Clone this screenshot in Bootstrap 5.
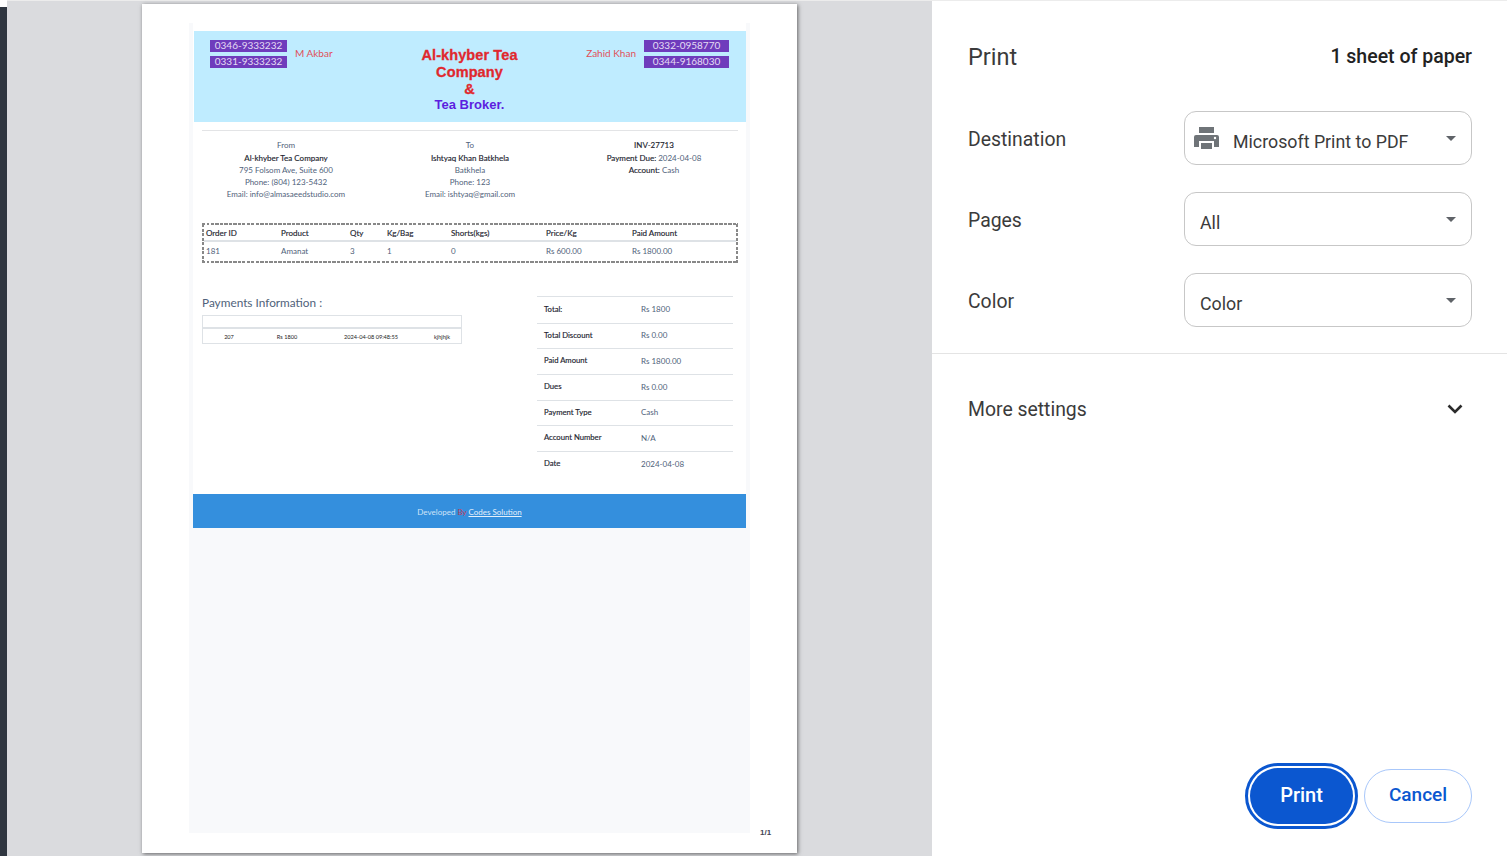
<!DOCTYPE html>
<html lang="en"><head><meta charset="utf-8"><title>Print</title>
<link href="https://cdn.jsdelivr.net/npm/bootstrap@5.3.0/dist/css/bootstrap.min.css" rel="stylesheet">
<style>
html,body{height:856px;overflow:hidden;margin:0;background:#fff}
.shell{height:856px;font-family:Roboto,sans-serif}
.edge{width:7px;background:#2f3640;margin-top:7px;flex:none}
.preview{width:925px;flex:none;background:#dadbde;padding:3px 0 0 135px;border-top:1px solid #ececec}
.paper{width:655px;height:849px;background:#fff;box-shadow:1px 1px 4px rgba(0,0,0,.55);padding:19px 0 0 47px;font-family:Lato,sans-serif;font-size:8px;color:#50627a}
.sheet{width:561px;height:810px;background:#f8f9fb;padding:0 4px;flex:none}
.pagenum{margin:805px 0 0 10px;font:700 8px/10px "Liberation Sans",sans-serif;color:#445;width:14px}
.inv{background:#fff;height:471px;padding-top:8px}
.band{height:91px;background:#bfecff;margin-left:1px;padding:9px 17px 0 16px}
.phones{display:flex;flex-direction:column;gap:4px}
.phone{height:12px;background:#6f3cbc;color:#e4dcf4;font-size:10px;line-height:11px;text-align:center}
.w77{width:77px}.w85{width:85px}
.who{font-size:10px;color:#e0505a;height:26px;line-height:26px}
.brand{width:130px;text-align:center;font-family:"Liberation Sans",sans-serif;font-weight:700;font-size:14.5px;line-height:17px;color:#e0282e;margin-top:7px;letter-spacing:.1px;-webkit-text-stroke:.3px #e0282e}
.brand div:last-child{font-size:13px;color:#5c1ee0;line-height:14px;-webkit-text-stroke:0;letter-spacing:0}
.side{width:184px}
.rule{height:1px;background:#e3e4e6;margin:8px 8px 0 9px}
.addr{margin:8px 0 0 1px;padding-top:.3px;width:552px;line-height:12.2px;text-align:center;font-size:8px}
.addr>div{width:33.333%}
.ink{color:#1e2530;-webkit-text-stroke:.15px #1e2530}
.dash{width:536px;height:40px;margin:23px 0 0 9px;padding:2px;overflow:hidden;background:
 repeating-linear-gradient(90deg,#888 0 3px,transparent 3px 4.5px) 0 0/100% 2px no-repeat,
 repeating-linear-gradient(90deg,#888 0 3px,transparent 3px 4.5px) 0 100%/100% 2px no-repeat,
 repeating-linear-gradient(0deg,#888 0 3px,transparent 3px 4.5px) 0 0/2px 100% no-repeat,
 repeating-linear-gradient(0deg,#888 0 3px,transparent 3px 4.5px) 100% 0/2px 100% no-repeat}
.dash table,.mini table,.sums table{margin:0;table-layout:fixed;width:100%;color:inherit;background:transparent}
.dash th{font-weight:400;color:#1e2530;-webkit-text-stroke:.15px #1e2530;font-size:8px;padding:3px 0 1px 2px;height:16px;line-height:11px;border-bottom:2px solid #dee2e6;background:transparent}
.dash td{font-size:8px;padding:3px 0 3px 2px;line-height:12px;border:0;color:#50627a;background:transparent}
.cols{margin:33px 0 0 9px;width:531px}
.paytitle{font-size:11.8px;line-height:14px;margin:0;color:#50627a}
.mini{width:260px;margin-top:5px;border:1px solid #dee2e6}
.blank{height:13px;border-bottom:2px solid #dee2e6}
.mini td{font-size:5.6px;line-height:8px;text-align:center;padding:4px 0 2px;height:14px;border:0;color:#222;background:transparent}
.sums{width:196px;margin-left:75px;border-top:1px solid #dee2e6}
.sums tr{height:25.7px}
.sums th{width:104px;padding:0 0 1px 7px;font-size:7.7px;font-weight:400;-webkit-text-stroke:.15px #1e2530;vertical-align:middle;color:#1e2530;border-bottom:1px solid #dee2e6;background:transparent}
.sums td{padding:0 0 1px;font-size:8px;vertical-align:middle;border-bottom:1px solid #dee2e6;color:#50627a;background:transparent}
.sums tr:last-child th,.sums tr:last-child td{border-bottom:0}
.foot{height:34px;background:#348fdd;color:#cfe4f8;font-size:8px;line-height:36px;text-align:center}
.foot em{font-style:normal;color:#c0405a}
.foot a{color:#e4f0fb}
.panel{flex:1;border-top:1px solid #ececec;color:#1f1f1f}
.top{padding:0 35px 0 36px;height:353px;border-bottom:1px solid #e4e4e4}
.head{height:110px;padding-top:38px;line-height:36px}
.h1x{font-size:23.5px;color:#3b3b3b}
.sheets{font-size:19.5px;font-weight:500;color:#222}
.line{height:54px;margin-bottom:27px}
.lbl{font-size:19.4px;color:#3b3b3b;padding-top:4px}
.pick{width:288px;height:54px;border:1px solid #c7c7c7;border-radius:12px;padding:5px 15px;font-size:17.8px;color:#3b3b3b}
.pick .val{margin-top:11px;line-height:28px}
.caret{width:0;height:0;border-left:5.5px solid transparent;border-right:5.500px solid transparent;border-top:5.5px solid #5f6368;margin-left:auto;align-self:center}
.ico{width:27px;height:27px;margin:3px 13px 0 -7px;align-self:center;flex:none}
.more{padding:38px 35px 0 36px;height:414px;font-size:19.4px;line-height:36px;color:#3b3b3b}
.more svg{margin:12px 9px 0 0}
.acts{padding-right:35px;gap:6px}
.go,.stop{font-family:Roboto,sans-serif;font-size:20px;line-height:20px;font-weight:500;border-radius:28px;padding:0 0 2px;height:54px}
.go{width:103px;height:56px;background:#0b57d0;color:#fff;border:0;outline:3px solid #0b57d0;outline-offset:2px;margin-right:5px}
.stop{width:108px;font-size:19px;background:#fff;color:#0b57d0;border:1px solid #a8c7fa}
</style></head>
<body>
<div class="shell d-flex">
 <div class="edge"></div>
 <div class="preview">
  <div class="paper d-flex">
   <div class="sheet">
    <div class="inv">
     <div class="band d-flex justify-content-between">
      <div class="side d-flex gap-2">
       <div class="phones w77"><div class="phone">0346-9333232</div><div class="phone">0331-9333232</div></div>
       <div class="who">M Akbar</div>
      </div>
      <div class="brand"><div>Al-khyber Tea</div><div>Company</div><div>&amp;</div><div>Tea Broker.</div></div>
      <div class="side d-flex gap-2 justify-content-end">
       <div class="who">Zahid Khan</div>
       <div class="phones w85"><div class="phone">0332-0958770</div><div class="phone">0344-9168030</div></div>
      </div>
     </div>
     <div class="rule"></div>
     <div class="addr d-flex">
      <div><div>From</div><div class="ink">Al-khyber Tea Company</div><div>795 Folsom Ave, Suite 600</div><div>Phone: (804) 123-5432</div><div>Email: info@almasaeedstudio.com</div></div>
      <div><div>To</div><div class="ink">Ishtyaq Khan Batkhela</div><div>Batkhela</div><div>Phone: 123</div><div>Email: ishtyaq@gmail.com</div></div>
      <div><div class="ink">INV-27713</div><div><span class="ink">Payment Due:</span> 2024-04-08</div><div><span class="ink">Account:</span> Cash</div></div>
     </div>
     <div class="dash">
      <table class="table">
       <colgroup><col style="width:75px"><col style="width:69px"><col style="width:37px"><col style="width:64px"><col style="width:95px"><col style="width:86px"><col></colgroup>
       <thead><tr><th>Order ID</th><th>Product</th><th>Qty</th><th>Kg/Bag</th><th>Shorts(kgs)</th><th>Price/Kg</th><th>Paid Amount</th></tr></thead>
       <tbody><tr><td>181</td><td>Amanat</td><td>3</td><td>1</td><td>0</td><td>Rs 600.00</td><td>Rs 1800.00</td></tr></tbody>
      </table>
     </div>
     <div class="cols d-flex">
      <div>
       <p class="paytitle">Payments Information :</p>
       <div class="mini">
        <div class="blank"></div>
        <table class="table"><colgroup><col style="width:52px"><col style="width:64px"><col style="width:104px"><col></colgroup><tbody><tr><td>207</td><td>Rs 1800</td><td>2024-04-08 09:48:55</td><td>kjhjhjk</td></tr></tbody></table>
       </div>
      </div>
      <div class="sums">
       <table class="table"><tbody>
        <tr><th>Total:</th><td>Rs 1800</td></tr>
        <tr><th>Total Discount</th><td>Rs 0.00</td></tr>
        <tr><th>Paid Amount</th><td>Rs 1800.00</td></tr>
        <tr><th>Dues</th><td>Rs 0.00</td></tr>
        <tr><th>Payment Type</th><td>Cash</td></tr>
        <tr><th>Account Number</th><td>N/A</td></tr>
        <tr><th>Date</th><td>2024-04-08</td></tr>
       </tbody></table>
      </div>
     </div>
    </div>
    <div class="foot">Developed <em>By</em> <a href="#">Codes Solution</a></div>
   </div>
   <div class="pagenum">1/1</div>
  </div>
 </div>
 <div class="panel">
  <div class="top">
   <div class="head d-flex justify-content-between"><span class="h1x">Print</span><span class="sheets">1 sheet of paper</span></div>
   <div class="line d-flex justify-content-between align-items-center"><span class="lbl">Destination</span>
    <div class="pick d-flex"><svg class="ico" viewBox="0 0 27 27" fill="#6f7478"><path d="M6 1h15v6H6z"/><path d="M3 9h21a2 2 0 0 1 2 2v10h-5v-6H6v6H1V11a2 2 0 0 1 2-2z"/><path d="M8 17h11v6H8z"/><circle cx="22" cy="12" r="1.2" fill="#fff"/></svg><span class="val">Microsoft Print to PDF</span><span class="caret"></span></div></div>
   <div class="line d-flex justify-content-between align-items-center"><span class="lbl">Pages</span>
    <div class="pick d-flex"><span class="val">All</span><span class="caret"></span></div></div>
   <div class="line d-flex justify-content-between align-items-center"><span class="lbl">Color</span>
    <div class="pick d-flex"><span class="val">Color</span><span class="caret"></span></div></div>
  </div>
  <div class="more d-flex justify-content-between"><span>More settings</span><svg width="16" height="10" viewBox="0 0 16 10" fill="none" stroke="#2b2b2b" stroke-width="2.6"><path d="M1.500 1.500 8 8l6.500-6.500"/></svg></div>
  <div class="acts d-flex justify-content-end align-items-center"><button class="btn go">Print</button><button class="btn stop">Cancel</button></div>
 </div>
</div>
<script src="https://cdn.jsdelivr.net/npm/bootstrap@5.3.0/dist/js/bootstrap.bundle.min.js"></script>
</body></html>
